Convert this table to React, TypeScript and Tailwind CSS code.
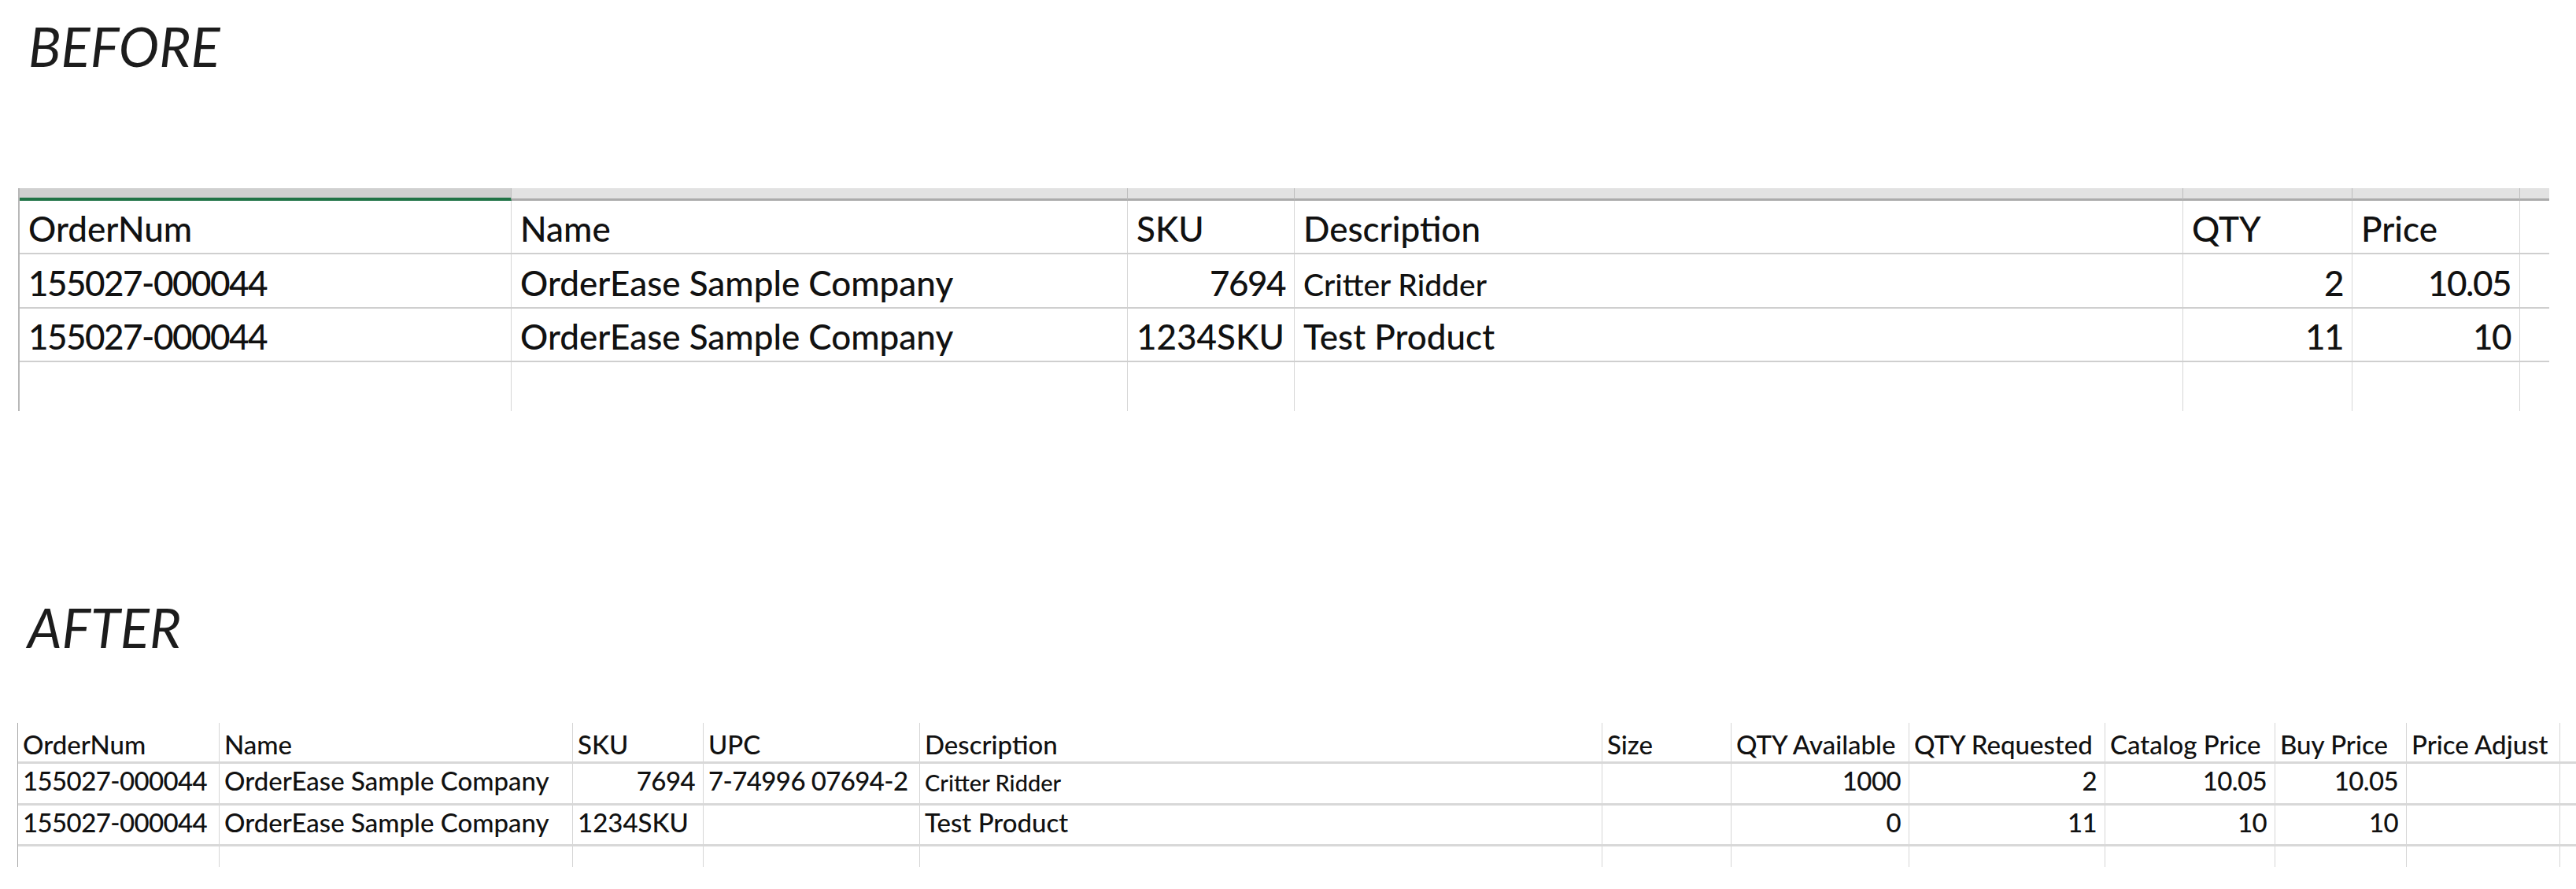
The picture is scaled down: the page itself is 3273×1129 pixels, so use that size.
import React from 'react';

type Cell = { t?: string; r?: boolean; sm?: boolean };

const E: Cell = {};

const beforeRows: Cell[][] = [
  [{ t: 'OrderNum' }, { t: 'Name' }, { t: 'SKU' }, { t: 'Description' }, { t: 'QTY' }, { t: 'Price' }, E],
  [{ t: '155027-000044' }, { t: 'OrderEase Sample Company' }, { t: '7694', r: true }, { t: 'Critter Ridder', sm: true }, { t: '2', r: true }, { t: '10.05', r: true }, E],
  [{ t: '155027-000044' }, { t: 'OrderEase Sample Company' }, { t: '1234SKU' }, { t: 'Test Product' }, { t: '11', r: true }, { t: '10', r: true }, E],
  [E, E, E, E, E, E, E],
];

const afterRows: Cell[][] = [
  [{ t: 'OrderNum' }, { t: 'Name' }, { t: 'SKU' }, { t: 'UPC' }, { t: 'Description' }, { t: 'Size' }, { t: 'QTY Available' }, { t: 'QTY Requested' }, { t: 'Catalog Price' }, { t: 'Buy Price' }, { t: 'Price Adjust' }, E],
  [{ t: '155027-000044' }, { t: 'OrderEase Sample Company' }, { t: '7694', r: true }, { t: '7-74996 07694-2' }, { t: 'Critter Ridder', sm: true }, E, { t: '1000', r: true }, { t: '2', r: true }, { t: '10.05', r: true }, { t: '10.05', r: true }, E, E],
  [{ t: '155027-000044' }, { t: 'OrderEase Sample Company' }, { t: '1234SKU' }, E, { t: 'Test Product' }, E, { t: '0', r: true }, { t: '11', r: true }, { t: '10', r: true }, { t: '10', r: true }, E, E],
  [E, E, E, E, E, E, E, E, E, E, E, E],
];

// Calibri digits are narrower than Lato's, so squeeze numeric cells a bit
const isNum = (t?: string) => !!t && /^[0-9.\- ]+$/.test(t);

// row heights incl. bottom gridline
const beforeHeights = ['h-[68px]', 'h-[69px]', 'h-[68px]', 'h-[62px]'];
const afterHeights = ['h-[52px]', 'h-[53px]', 'h-[52px]', 'h-[26px]'];
const afterPad = ['pb-[5px]', 'pb-[12px]', 'pb-[11px]', ''];

const BeforeTable = () => (
  <div className="ml-[23px] w-[3216px] border-l-2 border-[#b8b8b8] font-['Lato',sans-serif] font-medium text-[#111]">
    {/* column header strip (cut off at the top) */}
    <div className="grid grid-cols-[625px_783px_212px_1129px_215px_213px_37px] h-[16px]">
      {[0, 1, 2, 3, 4, 5, 6].map((i) => (
        <div
          key={i}
          className={
            i === 0
              ? 'bg-[#d0d0d0] border-r border-[#bdbdbd] border-b-4 border-b-[#217346]'
              : i === 6
              ? 'bg-[#e2e2e2] border-b-[3px] border-b-[#ababab]'
              : 'bg-[#e2e2e2] border-r border-[#bdbdbd] border-b-[3px] border-b-[#ababab]'
          }
        />
      ))}
    </div>
    {beforeRows.map((row, ri) => (
      <div
        key={ri}
        className={`grid grid-cols-[625px_783px_212px_1129px_215px_213px_37px] ${beforeHeights[ri]} ${ri < 3 ? 'border-b-2 border-[#cfcfcf]' : ''}`}
      >
        {row.map((c, ci) => (
          <div
            key={ci}
            className={`flex items-end pb-[9px] pl-[11px] pr-[11px] whitespace-nowrap ${ci < 6 ? 'border-r border-[#d6d6d6]' : ''} ${c.r ? 'justify-end' : ''}`}
          >
            <span
              className={`leading-none ${c.sm ? 'text-[39px]' : 'text-[44px]'} ${isNum(c.t) ? 'tracking-[-1.5px]' : ''}`}
            >
              {c.t}
            </span>
          </div>
        ))}
      </div>
    ))}
  </div>
);

const AfterTable = () => (
  <div className="ml-[22px] w-[3251px] border-l border-[#a8a8a8] font-['Lato',sans-serif] font-medium text-[#111]">
    {afterRows.map((row, ri) => (
      <div
        key={ri}
        className={`grid grid-cols-[256px_449px_166px_275px_867px_164px_226px_249px_216px_167px_195px_20px] ${afterHeights[ri]} ${ri < 3 ? 'border-b-[3px] border-[#d8d8d8]' : ''}`}
      >
        {row.map((c, ci) => (
          <div
            key={ci}
            className={`flex items-end ${afterPad[ri]} pl-[6px] pr-[10px] whitespace-nowrap ${ci < 11 ? 'border-r border-[#d6d6d6]' : ''} ${c.r ? 'justify-end' : ''}`}
          >
            <span
              className={`leading-none ${c.sm ? 'text-[29px]' : 'text-[33px]'} ${isNum(c.t) ? 'tracking-[-0.6px]' : ''}`}
            >
              {c.t}
            </span>
          </div>
        ))}
      </div>
    ))}
  </div>
);

export default function App() {
  return (
    <div className="w-[3273px] h-[1129px] bg-white overflow-hidden">
      <h2 className="pt-[24px] pl-[36px] font-['Lato',sans-serif] italic font-normal text-[69px] leading-none text-[#1c1c1c]">
        BEFORE
      </h2>
      <div className="mt-[146px]">
        <BeforeTable />
      </div>
      <h2 className="mt-[240px] pl-[35px] font-['Lato',sans-serif] italic font-normal text-[69px] leading-none text-[#1c1c1c]">
        AFTER
      </h2>
      <div className="mt-[87px]">
        <AfterTable />
      </div>
    </div>
  );
}
